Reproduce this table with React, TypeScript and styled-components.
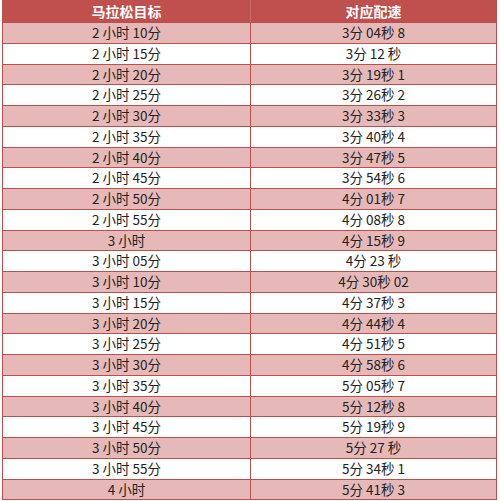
import React from "react";
import styled, { createGlobalStyle } from "styled-components";

const rows: [string, string][] = [
  ["2 小时 10分", "3分 04秒 8"],
  ["2 小时 15分", "3分 12 秒"],
  ["2 小时 20分", "3分 19秒 1"],
  ["2 小时 25分", "3分 26秒 2"],
  ["2 小时 30分", "3分 33秒 3"],
  ["2 小时 35分", "3分 40秒 4"],
  ["2 小时 40分", "3分 47秒 5"],
  ["2 小时 45分", "3分 54秒 6"],
  ["2 小时 50分", "4分 01秒 7"],
  ["2 小时 55分", "4分 08秒 8"],
  ["3 小时", "4分 15秒 9"],
  ["3 小时 05分", "4分 23 秒"],
  ["3 小时 10分", "4分 30秒 02"],
  ["3 小时 15分", "4分 37秒 3"],
  ["3 小时 20分", "4分 44秒 4"],
  ["3 小时 25分", "4分 51秒 5"],
  ["3 小时 30分", "4分 58秒 6"],
  ["3 小时 35分", "5分 05秒 7"],
  ["3 小时 40分", "5分 12秒 8"],
  ["3 小时 45分", "5分 19秒 9"],
  ["3 小时 50分", "5分 27 秒"],
  ["3 小时 55分", "5分 34秒 1"],
  ["4 小时", "5分 41秒 3"],
];

const GlobalStyle = createGlobalStyle`
  html, body {
    margin: 0;
    padding: 0;
    background: #ffffff;
  }
`;

const Page = styled.div`
  width: 500px;
  height: 501px;
  padding: 0 3px 0 2px;
  box-sizing: border-box;
  font-family: "Noto Sans CJK SC", "Liberation Sans", sans-serif;
`;

const Table = styled.div`
  display: grid;
  grid-template-columns: 248px 1fr;
  grid-template-rows: 22px repeat(23, 20.75px);
  border-left: 1px solid #b5514e;
  border-right: 1px solid #b5514e;
  border-bottom: 1px solid #b5514e;
  box-sizing: border-box;
  height: 500px;
`;

const HeadCell = styled.div`
  background: #c0504d;
  color: #ffffff;
  font-weight: 700;
  font-size: 14px;
  display: flex;
  align-items: center;
  justify-content: center;
  border-right: ${(p: { $left?: boolean }) => (p.$left ? "1px solid #c86a68" : "none")};
`;

const Cell = styled.div<{ $pink: boolean; $left?: boolean }>`
  background: ${(p) => (p.$pink ? "#e6b9b8" : "#ffffff")};
  color: #222222;
  font-size: 13.5px;
  display: flex;
  align-items: center;
  justify-content: center;
  border-top: 1px solid #b5514e;
  border-right: ${(p) => (p.$left ? "1px solid #b5514e" : "none")};
  box-sizing: border-box;
  line-height: 1;
`;

const App: React.FC = () => (
  <Page>
    <GlobalStyle />
    <Table>
      <HeadCell $left>马拉松目标</HeadCell>
      <HeadCell>对应配速</HeadCell>
      {rows.map(([goal, pace], i) => (
        <React.Fragment key={goal}>
          <Cell $pink={i % 2 === 0} $left>
            {goal}
          </Cell>
          <Cell $pink={i % 2 === 0}>{pace}</Cell>
        </React.Fragment>
      ))}
    </Table>
  </Page>
);

export default App;
